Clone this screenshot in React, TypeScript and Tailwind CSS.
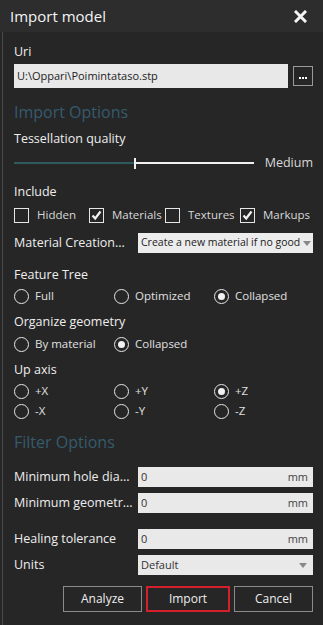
import React from "react";

const font = { fontFamily: '"Open Sans", "Noto Sans", sans-serif' };

function Check({ checked, label }: { checked?: boolean; label: string }) {
  return (
    <div className="flex items-center">
      <div className="w-[15px] h-[15px] border border-[#e6e6e6] flex items-center justify-center shrink-0">
        {checked && (
          <svg width="11" height="11" viewBox="0 0 11 11">
            <path d="M1.5 5.5 L4.2 8.5 L9.5 1.5" stroke="#f2f2f2" strokeWidth="2.2" fill="none" />
          </svg>
        )}
      </div>
      <span className="ml-[8px] text-[11.5px] text-[#d8d8d8] whitespace-nowrap">{label}</span>
    </div>
  );
}

function Radio({ checked, label }: { checked?: boolean; label: string }) {
  return (
    <div className="flex items-center">
      <div className="w-[15px] h-[15px] rounded-full border-[1.5px] border-[#e6e6e6] flex items-center justify-center">
        {checked && <div className="w-[7px] h-[7px] rounded-full bg-[#f2f2f2]" />}
      </div>
      <span className="ml-[6px] text-[11.5px] text-[#e0e0e0]">{label}</span>
    </div>
  );
}

function Field({ label, value }: { label: string; value: string }) {
  return (
    <div className="flex items-center h-[20px]">
      <div className="w-[124px] text-[12.5px] text-[#eeeeee] whitespace-nowrap">{label}</div>
      <div className="flex-1 h-[20px] bg-[#e9e9e9] flex items-center justify-between px-[3px] text-[11px] text-[#333]">
        <span>{value}</span>
        <span className="text-[#444] mr-[2px]">mm</span>
      </div>
    </div>
  );
}

export default function App() {
  return (
    <div className="w-[323px] h-[625px] bg-[#262626] flex flex-col overflow-hidden" style={font}>
      <div className="h-[32px] bg-[#2d2d2d] flex items-center justify-between pl-[10px] pr-[16px] shrink-0">
        <span className="text-[15px] text-[#f4f4f4]">Import model</span>
        <svg width="13" height="13" viewBox="0 0 13 13">
          <path d="M2 2 L11 11 M11 2 L2 11" stroke="#f4f4f4" strokeWidth="3" strokeLinecap="square" />
        </svg>
      </div>

      <div className="flex-1 border-l border-[#4a4a4a] ml-[2px] pl-[11px] pr-[10px] flex flex-col">
        <div className="h-[20px] mt-[10px] flex items-center text-[12.5px] text-[#eeeeee]">Uri</div>
        <div className="mt-[2px] h-[24px] flex items-center">
          <div className="w-[274px] h-[24px] bg-[#e8e8e8] flex items-center pl-[3px] text-[11px] text-[#222]">
            U:\Oppari\Poimintataso.stp
          </div>
          <div className="ml-[5px] w-[20px] h-[20px] border border-[#9a9a9a] flex items-end justify-center gap-[1px] pb-[6px]">
            <div className="w-[2px] h-[2px] bg-white" />
            <div className="w-[2px] h-[2px] bg-white" />
            <div className="w-[2px] h-[2px] bg-white" />
          </div>
        </div>

        <div className="mt-[12px] h-[24px] flex items-center text-[16px] text-[#355b6d]">Import Options</div>

        <div className="mt-[6px] h-[18px] flex items-center text-[12.5px] text-[#eeeeee]">Tessellation quality</div>
        <div className="mt-[6px] h-[18px] flex items-center">
          <div className="w-[120px] h-[2px] bg-[#2f5a60]" />
          <div className="w-[2px] h-[11px] bg-[#f0f0f0]" />
          <div className="w-[118px] h-[2px] bg-[#f0f0f0]" />
          <span className="ml-auto text-[12.5px] text-[#d8d8d8]">Medium</span>
        </div>

        <div className="mt-[11px] h-[18px] flex items-center text-[12.5px] text-[#eeeeee]">Include</div>
        <div className="mt-[5px] h-[18px] grid grid-cols-[75px_76px_75px_1fr] items-center">
          <Check label="Hidden" />
          <Check checked label="Materials" />
          <Check label="Textures" />
          <Check checked label="Markups" />
        </div>

        <div className="mt-[9px] h-[20px] flex items-center">
          <div className="w-[124px] text-[12.5px] text-[#eeeeee] whitespace-nowrap">Material Creation...</div>
          <div className="flex-1 h-[20px] bg-[#ececec] flex items-center justify-between pl-[3px] pr-[2px] text-[10.5px] text-[#222] whitespace-nowrap">
            <span>Create a new material if no good</span>
            <svg width="8" height="5" viewBox="0 0 8 5">
              <path d="M0 0 L8 0 L4 5 Z" fill="#888" />
            </svg>
          </div>
        </div>

        <div className="mt-[13px] h-[18px] flex items-center text-[12.5px] text-[#eeeeee]">Feature Tree</div>
        <div className="mt-[3px] h-[18px] grid grid-cols-[100px_100px_1fr] items-center">
          <Radio label="Full" />
          <Radio label="Optimized" />
          <Radio checked label="Collapsed" />
        </div>

        <div className="mt-[8px] h-[18px] flex items-center text-[12.5px] text-[#eeeeee]">Organize geometry</div>
        <div className="mt-[4px] h-[18px] grid grid-cols-[100px_100px_1fr] items-center">
          <Radio label="By material" />
          <Radio checked label="Collapsed" />
        </div>

        <div className="mt-[8px] h-[18px] flex items-center text-[12.5px] text-[#eeeeee]">Up axis</div>
        <div className="mt-[3px] h-[18px] grid grid-cols-[100px_100px_1fr] items-center">
          <Radio label="+X" />
          <Radio label="+Y" />
          <Radio checked label="+Z" />
        </div>
        <div className="mt-[2px] h-[18px] grid grid-cols-[100px_100px_1fr] items-center">
          <Radio label="-X" />
          <Radio label="-Y" />
          <Radio label="-Z" />
        </div>

        <div className="mt-[10px] h-[24px] flex items-center text-[16px] text-[#355b6d]">Filter Options</div>

        <div className="mt-[13px]">
          <Field label="Minimum hole dia..." value="0" />
        </div>
        <div className="mt-[6px]">
          <Field label="Minimum geometr..." value="0" />
        </div>
        <div className="mt-[16px]">
          <Field label="Healing tolerance" value="0" />
        </div>
        <div className="mt-[6px] h-[20px] flex items-center">
          <div className="w-[124px] text-[12.5px] text-[#eeeeee]">Units</div>
          <div className="flex-1 h-[20px] bg-[#e9e9e9] flex items-center justify-between pl-[3px] pr-[6px] text-[11px] text-[#333]">
            <span>Default</span>
            <svg width="8" height="5" viewBox="0 0 8 5">
              <path d="M0 0 L8 0 L4 5 Z" fill="#888" />
            </svg>
          </div>
        </div>

        <div className="mt-[11px] h-[26px] flex justify-end gap-[4px]">
          <button className="w-[79px] h-[26px] border border-[#8a8a8a] text-[12px] text-[#eeeeee]">Analyze</button>
          <button className="w-[84px] h-[26px] border-2 border-[#d3202a] text-[12px] text-[#eeeeee]">Import</button>
          <button className="w-[79px] h-[26px] border border-[#8a8a8a] text-[12px] text-[#eeeeee]">Cancel</button>
        </div>
      </div>
    </div>
  );
}
